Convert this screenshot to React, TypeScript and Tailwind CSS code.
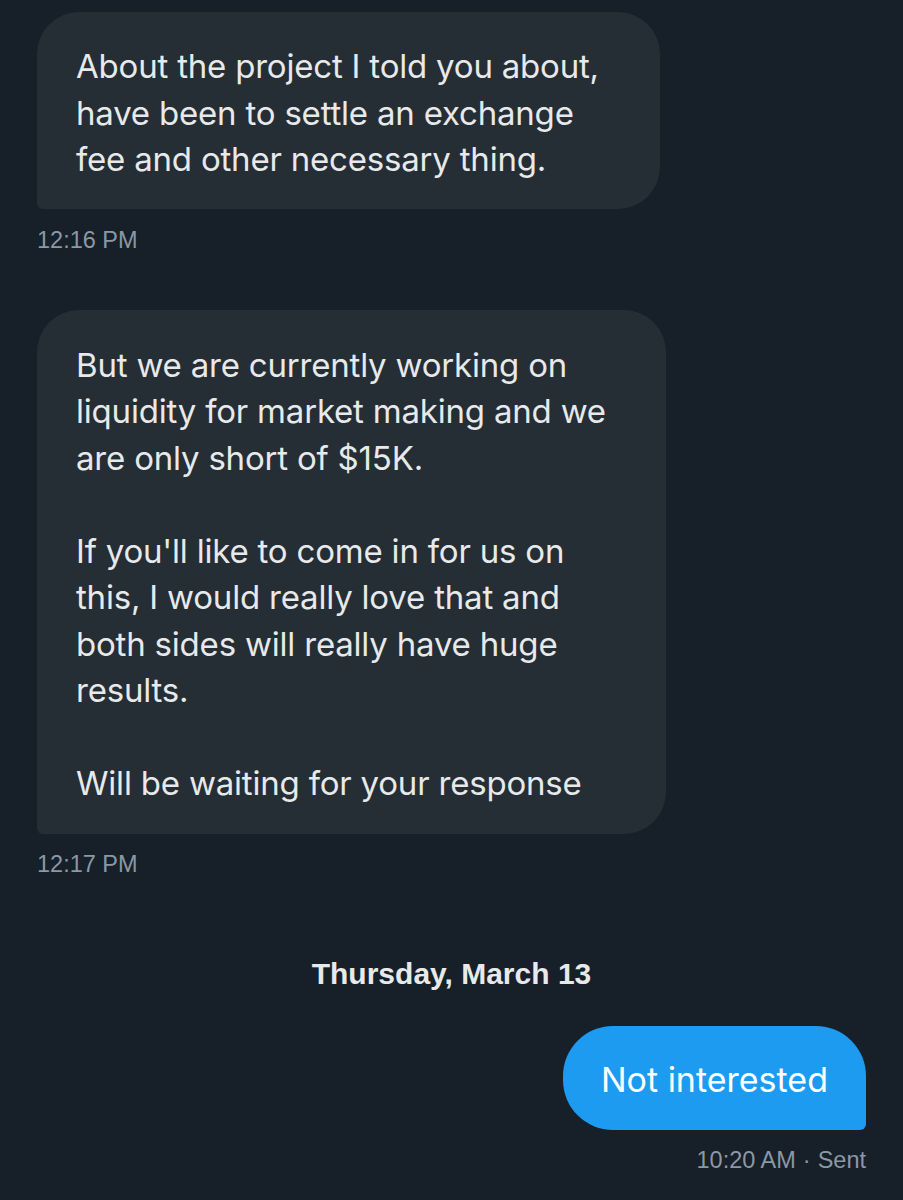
const bodyFont = "font-['Inter','Noto_Sans',sans-serif]"
const metaFont = "font-['Liberation_Sans',Arial,sans-serif]"

function Received({ lines, className }: { lines: string[]; className: string }) {
  return (
    <div className={`self-start rounded-[42px] rounded-bl-[6px] bg-[#252d35] pl-[39px] pr-[20px] ${className}`}>
      <p className={`${bodyFont} text-[33px] leading-[46.5px] tracking-[-0.2px] text-[#e7e9ea] whitespace-nowrap`}>
        {lines.map((line, i) => (
          <span key={i} className="block">
            {line === '' ? '\u00a0' : line}
          </span>
        ))}
      </p>
    </div>
  )
}

function Stamp({ children, className }: { children: React.ReactNode; className: string }) {
  return (
    <div className={`${metaFont} text-[23.5px] leading-[26px] text-[#8b98a5] ${className}`}>
      {children}
    </div>
  )
}

export default function App() {
  return (
    <div className="w-[903px] h-[1200px] overflow-hidden bg-[#171f28]">
      <div className="flex flex-col pt-[12px] px-[37px]">
        <Received
          className="w-[623px] pt-[31px] pb-[26px]"
          lines={[
            'About the project I told you about,',
            'have been to settle an exchange',
            'fee and other necessary thing.',
          ]}
        />
        <Stamp className="mt-[18px]">12:16 PM</Stamp>

        <Received
          className="w-[629px] mt-[57px] pt-[32px] pb-[27px]"
          lines={[
            'But we are currently working on',
            'liquidity for market making and we',
            'are only short of $15K.',
            '',
            "If you'll like to come in for us on",
            'this, I would really love that and',
            'both sides will really have huge',
            'results.',
            '',
            'Will be waiting for your response',
          ]}
        />
        <Stamp className="mt-[17px]">12:17 PM</Stamp>

        {/* date divider */}
        <div className={`${metaFont} mt-[80px] text-center text-[30px] leading-[34px] font-bold text-[#e7e9ea]`}>
          Thursday, March 13
        </div>

        {/* sent */}
        <div className="self-end mt-[35px] rounded-[50px] rounded-br-[6px] bg-[#1d9bf0] px-[38px] pt-[31px] pb-[27px]">
          <p className={`${bodyFont} text-[34px] leading-[46.5px] text-white whitespace-nowrap`}>
            Not interested
          </p>
        </div>
        <Stamp className="self-end mt-[17px] flex items-baseline">
          <span>10:20 AM</span>
          <span className="mx-[7px]">·</span>
          <span>Sent</span>
        </Stamp>
      </div>
    </div>
  )
}
